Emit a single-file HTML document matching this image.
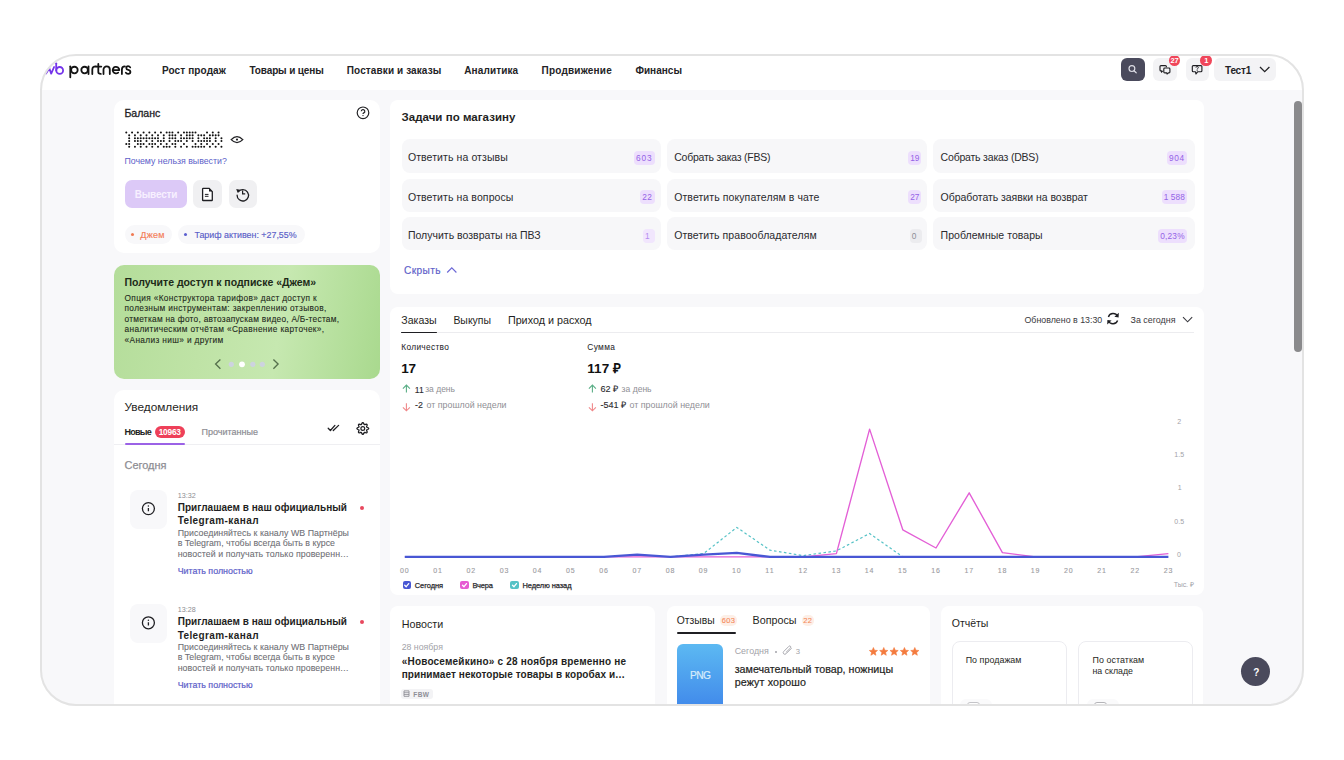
<!DOCTYPE html>
<html><head><meta charset="utf-8"><style>
html,body{margin:0;padding:0;background:#fff;width:1344px;height:760px;overflow:hidden;font-family:"Liberation Sans", sans-serif;}
#frame{position:absolute;left:40px;top:54px;width:1264px;height:652px;border-radius:36px;overflow:hidden;background:#f8f8fa;}
#pg{position:absolute;left:-40px;top:-54px;width:1344px;height:760px;}
#bord{position:absolute;left:40px;top:54px;width:1264px;height:652px;box-sizing:border-box;border:2px solid #e3e3e3;border-radius:36px;}
svg{position:absolute;overflow:visible;}
</style></head><body><div id="frame"><div id="pg">
<div style="position:absolute;left:0px;top:0px;width:1344px;height:89.5px;background:#ffffff;border-radius:0px;"></div>
<svg style="left:0;top:0" width="1" height="1"><g fill="none" stroke="#7434ea" stroke-width="1.8" stroke-linecap="round" stroke-linejoin="round"><path d="M46 73.6 L49.3 68.2 L51.2 73.6 L54.1 67"/><path d="M56.2 63.3 V70.4"/><circle cx="59.7" cy="70.4" r="3.4"/></g><g fill="none" stroke="#141414" stroke-width="1.8" stroke-linecap="round" stroke-linejoin="round"><path d="M70.3 66.3 V77.3"/><circle cx="74.4" cy="70.05" r="3.3"/><circle cx="84.6" cy="70.05" r="3.3"/><path d="M88.5 66.4 V74"/><path d="M92.3 74 V69.6 Q92.3 66.4 95.9 66.4"/><path d="M98.3 64 V72 Q98.3 73.9 100.8 73.9 M95.9 66.6 H101.3"/><path d="M103.5 74 V69.6 A3.15 3.15 0 0 1 109.8 69.6 V74"/><path d="M112.9 70.1 H119.3 A3.3 3.3 0 1 0 118.2 72.6"/><path d="M121.9 74 V69.6 Q121.9 66.4 124.9 66.4"/><path d="M130.2 67.4 Q129.5 66.2 128.1 66.2 Q126.3 66.2 126.3 67.9 Q126.3 69.5 128.3 69.9 Q130.4 70.3 130.4 72.1 Q130.4 73.9 128.1 73.9 Q126.4 73.9 125.8 72.7"/></g></svg>
<div id="t0" style="position:absolute;left:162px;top:64px;font-size:10px;line-height:13px;font-weight:700;color:#232326;letter-spacing:0.112px;white-space:nowrap;">Рост продаж</div>
<div id="t1" style="position:absolute;left:249.5px;top:64px;font-size:10px;line-height:13px;font-weight:700;color:#232326;letter-spacing:-0.132px;white-space:nowrap;">Товары и цены</div>
<div id="t2" style="position:absolute;left:346.8px;top:64px;font-size:10px;line-height:13px;font-weight:700;color:#232326;letter-spacing:0.106px;white-space:nowrap;">Поставки и заказы</div>
<div id="t3" style="position:absolute;left:464.2px;top:64px;font-size:10px;line-height:13px;font-weight:700;color:#232326;letter-spacing:0.129px;white-space:nowrap;">Аналитика</div>
<div id="t4" style="position:absolute;left:541.5px;top:64px;font-size:10px;line-height:13px;font-weight:700;color:#232326;letter-spacing:0.21px;white-space:nowrap;">Продвижение</div>
<div id="t5" style="position:absolute;left:635.4px;top:64px;font-size:10px;line-height:13px;font-weight:700;color:#232326;letter-spacing:0.023px;white-space:nowrap;">Финансы</div>
<div style="position:absolute;left:1121.2px;top:57.9px;width:23.6px;height:23.6px;background:#4a4a5c;border-radius:6px;"></div>
<svg style="left:1121px;top:58px" width="24" height="24" viewBox="0 0 24 24"><circle cx="10.9" cy="10.6" r="2.9" fill="none" stroke="#dcdce4" stroke-width="1.2"/><path d="M13 12.8 L15.2 14.8" stroke="#dcdce4" stroke-width="1.2" stroke-linecap="round"/></svg>
<div style="position:absolute;left:1152.6px;top:57.9px;width:24.0px;height:23.3px;background:#f3f3f5;border-radius:6px;"></div>
<svg style="left:0;top:0" width="1" height="1"><path d="M165.6 67.3 V66.6 a1 1 0 0 0 -1 -1 h-4.4 a1 1 0 0 0 -1 1 v3.3 a1 1 0 0 0 1 1 h0.5 v1.3 l1.3 -1.3" transform="translate(1000.8 0)" fill="none" stroke="#1f1f23" stroke-width="1.15" stroke-linejoin="round"/><path d="M1164.7 68 h4.3 a0.9 0.9 0 0 1 0.9 0.9 v3 a0.9 0.9 0 0 1 -0.9 0.9 h-0.6 l-1.3 1.2 l-0.3 -1.2 h-2.1 a0.9 0.9 0 0 1 -0.9 -0.9 v-3 a0.9 0.9 0 0 1 0.9 -0.9z" fill="#f3f3f5" stroke="#1f1f23" stroke-width="1.15" stroke-linejoin="round"/></svg>
<div style="position:absolute;left:1185.9px;top:57.9px;width:23.1px;height:23.3px;background:#f3f3f5;border-radius:6px;"></div>
<svg style="left:0;top:0" width="1" height="1"><path d="M1193.3 65.6 h7.6 a1 1 0 0 1 1 1 v4.2 a1 1 0 0 1 -1 1 h-3.3 l-1.6 2.2 l-0.5 -2.2 h-2.2 a1 1 0 0 1 -1 -1 v-4.2 a1 1 0 0 1 1 -1z" fill="none" stroke="#1f1f23" stroke-width="1.15" stroke-linejoin="round"/><path d="M1196 67.6 a1.15 1.15 0 1 1 1.7 1 c-0.45 0.25 -0.6 0.45 -0.6 0.9" fill="none" stroke="#1f1f23" stroke-width="0.95"/><circle cx="1197.1" cy="70.6" r="0.5" fill="#1f1f23"/></svg>
<div style="position:absolute;left:1168.7px;top:54.7px;width:11.4px;height:11.4px;background:#f0465a;border-radius:6px;"></div>
<div id="t6" style="position:absolute;left:1170.6px;top:56px;font-size:7.5px;line-height:10px;font-weight:700;color:#fff;letter-spacing:-0.372px;white-space:nowrap;">27</div>
<div style="position:absolute;left:1200.2px;top:54.7px;width:11.4px;height:11.4px;background:#f0465a;border-radius:6px;"></div>
<div id="t7" style="position:absolute;left:1204.15px;top:56px;font-size:7.5px;line-height:10px;font-weight:700;color:#fff;letter-spacing:-0.672px;white-space:nowrap;">1</div>
<div style="position:absolute;left:1214.4px;top:57.9px;width:61.6px;height:23.3px;background:#f3f3f5;border-radius:6px;"></div>
<div id="t8" style="position:absolute;left:1225px;top:64px;font-size:10px;line-height:13px;font-weight:700;color:#232326;letter-spacing:-0.212px;white-space:nowrap;">Тест1</div>
<svg style="left:1258px;top:64px" width="14" height="10" viewBox="0 0 14 10"><path d="M2 3 L6.7 7.6 L11.4 3" fill="none" stroke="#232326" stroke-width="1.3"/></svg>
<div style="position:absolute;left:1294px;top:101px;width:7.6px;height:251px;background:#8a8a8c;border-radius:4px;"></div>
<div style="position:absolute;left:114px;top:100px;width:266px;height:153.3px;background:#ffffff;border-radius:10px;"></div>
<div id="t9" style="position:absolute;left:124.4px;top:106px;font-size:10.573px;line-height:14px;font-weight:400;color:#232326;letter-spacing:0.0px;white-space:nowrap;-webkit-text-stroke-width:0.3px;">Баланс</div>
<svg style="left:355px;top:105px" width="16" height="16" viewBox="0 0 16 16"><circle cx="8" cy="7.8" r="5.8" fill="none" stroke="#232326" stroke-width="1.2"/><path d="M6.3 6.3 a1.75 1.75 0 1 1 2.5 1.6 c-0.6 0.3 -0.8 0.6 -0.8 1.2" fill="none" stroke="#232326" stroke-width="1.2"/><circle cx="8" cy="10.6" r="0.7" fill="#232326"/></svg>
<svg style="left:0;top:0" width="1" height="1"><g fill="#111"><circle cx="126.30" cy="132.50" r="1.02"/><circle cx="132.07" cy="132.50" r="1.02"/><circle cx="137.83" cy="132.50" r="1.02"/><circle cx="143.60" cy="132.50" r="1.02"/><circle cx="149.36" cy="132.50" r="1.02"/><circle cx="155.13" cy="132.50" r="1.02"/><circle cx="160.90" cy="132.50" r="1.02"/><circle cx="166.66" cy="132.50" r="1.02"/><circle cx="169.54" cy="132.50" r="1.02"/><circle cx="172.43" cy="132.50" r="1.02"/><circle cx="178.19" cy="132.50" r="1.02"/><circle cx="183.96" cy="132.50" r="1.02"/><circle cx="186.84" cy="132.50" r="1.02"/><circle cx="189.73" cy="132.50" r="1.02"/><circle cx="192.61" cy="132.50" r="1.02"/><circle cx="195.49" cy="132.50" r="1.02"/><circle cx="207.02" cy="132.50" r="1.02"/><circle cx="212.79" cy="132.50" r="1.02"/><circle cx="218.56" cy="132.50" r="1.02"/><circle cx="129.18" cy="135.36" r="1.02"/><circle cx="134.95" cy="135.36" r="1.02"/><circle cx="140.72" cy="135.36" r="1.02"/><circle cx="146.48" cy="135.36" r="1.02"/><circle cx="152.25" cy="135.36" r="1.02"/><circle cx="158.01" cy="135.36" r="1.02"/><circle cx="163.78" cy="135.36" r="1.02"/><circle cx="169.54" cy="135.36" r="1.02"/><circle cx="172.43" cy="135.36" r="1.02"/><circle cx="175.31" cy="135.36" r="1.02"/><circle cx="181.08" cy="135.36" r="1.02"/><circle cx="186.84" cy="135.36" r="1.02"/><circle cx="189.73" cy="135.36" r="1.02"/><circle cx="192.61" cy="135.36" r="1.02"/><circle cx="198.38" cy="135.36" r="1.02"/><circle cx="201.26" cy="135.36" r="1.02"/><circle cx="204.14" cy="135.36" r="1.02"/><circle cx="209.91" cy="135.36" r="1.02"/><circle cx="212.79" cy="135.36" r="1.02"/><circle cx="215.67" cy="135.36" r="1.02"/><circle cx="218.56" cy="135.36" r="1.02"/><circle cx="129.18" cy="138.22" r="1.02"/><circle cx="134.95" cy="138.22" r="1.02"/><circle cx="137.83" cy="138.22" r="1.02"/><circle cx="140.72" cy="138.22" r="1.02"/><circle cx="143.60" cy="138.22" r="1.02"/><circle cx="146.48" cy="138.22" r="1.02"/><circle cx="149.36" cy="138.22" r="1.02"/><circle cx="152.25" cy="138.22" r="1.02"/><circle cx="155.13" cy="138.22" r="1.02"/><circle cx="158.01" cy="138.22" r="1.02"/><circle cx="163.78" cy="138.22" r="1.02"/><circle cx="169.54" cy="138.22" r="1.02"/><circle cx="172.43" cy="138.22" r="1.02"/><circle cx="175.31" cy="138.22" r="1.02"/><circle cx="181.08" cy="138.22" r="1.02"/><circle cx="183.96" cy="138.22" r="1.02"/><circle cx="186.84" cy="138.22" r="1.02"/><circle cx="189.73" cy="138.22" r="1.02"/><circle cx="192.61" cy="138.22" r="1.02"/><circle cx="198.38" cy="138.22" r="1.02"/><circle cx="204.14" cy="138.22" r="1.02"/><circle cx="207.02" cy="138.22" r="1.02"/><circle cx="209.91" cy="138.22" r="1.02"/><circle cx="215.67" cy="138.22" r="1.02"/><circle cx="221.44" cy="138.22" r="1.02"/><circle cx="129.18" cy="141.08" r="1.02"/><circle cx="134.95" cy="141.08" r="1.02"/><circle cx="137.83" cy="141.08" r="1.02"/><circle cx="140.72" cy="141.08" r="1.02"/><circle cx="146.48" cy="141.08" r="1.02"/><circle cx="152.25" cy="141.08" r="1.02"/><circle cx="158.01" cy="141.08" r="1.02"/><circle cx="160.90" cy="141.08" r="1.02"/><circle cx="163.78" cy="141.08" r="1.02"/><circle cx="169.54" cy="141.08" r="1.02"/><circle cx="175.31" cy="141.08" r="1.02"/><circle cx="178.19" cy="141.08" r="1.02"/><circle cx="181.08" cy="141.08" r="1.02"/><circle cx="186.84" cy="141.08" r="1.02"/><circle cx="192.61" cy="141.08" r="1.02"/><circle cx="198.38" cy="141.08" r="1.02"/><circle cx="201.26" cy="141.08" r="1.02"/><circle cx="204.14" cy="141.08" r="1.02"/><circle cx="207.02" cy="141.08" r="1.02"/><circle cx="209.91" cy="141.08" r="1.02"/><circle cx="215.67" cy="141.08" r="1.02"/><circle cx="221.44" cy="141.08" r="1.02"/><circle cx="126.30" cy="143.94" r="1.02"/><circle cx="129.18" cy="143.94" r="1.02"/><circle cx="137.83" cy="143.94" r="1.02"/><circle cx="140.72" cy="143.94" r="1.02"/><circle cx="143.60" cy="143.94" r="1.02"/><circle cx="149.36" cy="143.94" r="1.02"/><circle cx="152.25" cy="143.94" r="1.02"/><circle cx="155.13" cy="143.94" r="1.02"/><circle cx="160.90" cy="143.94" r="1.02"/><circle cx="166.66" cy="143.94" r="1.02"/><circle cx="172.43" cy="143.94" r="1.02"/><circle cx="175.31" cy="143.94" r="1.02"/><circle cx="183.96" cy="143.94" r="1.02"/><circle cx="195.49" cy="143.94" r="1.02"/><circle cx="201.26" cy="143.94" r="1.02"/><circle cx="207.02" cy="143.94" r="1.02"/><circle cx="212.79" cy="143.94" r="1.02"/><circle cx="218.56" cy="143.94" r="1.02"/><circle cx="129.18" cy="146.80" r="1.02"/><circle cx="134.95" cy="146.80" r="1.02"/><circle cx="140.72" cy="146.80" r="1.02"/><circle cx="146.48" cy="146.80" r="1.02"/><circle cx="152.25" cy="146.80" r="1.02"/><circle cx="158.01" cy="146.80" r="1.02"/><circle cx="163.78" cy="146.80" r="1.02"/><circle cx="166.66" cy="146.80" r="1.02"/><circle cx="169.54" cy="146.80" r="1.02"/><circle cx="175.31" cy="146.80" r="1.02"/><circle cx="181.08" cy="146.80" r="1.02"/><circle cx="186.84" cy="146.80" r="1.02"/><circle cx="192.61" cy="146.80" r="1.02"/><circle cx="195.49" cy="146.80" r="1.02"/><circle cx="198.38" cy="146.80" r="1.02"/><circle cx="201.26" cy="146.80" r="1.02"/><circle cx="204.14" cy="146.80" r="1.02"/><circle cx="209.91" cy="146.80" r="1.02"/><circle cx="215.67" cy="146.80" r="1.02"/><circle cx="221.44" cy="146.80" r="1.02"/></g></svg>
<svg style="left:229px;top:133px" width="16" height="13" viewBox="0 0 16 13"><path d="M2.2 6.6 Q8 0.6 13.8 6.6 Q8 12.6 2.2 6.6z" fill="none" stroke="#232326" stroke-width="1.3"/><circle cx="8" cy="6.6" r="1.1" fill="#232326"/></svg>
<div id="t10" style="position:absolute;left:124.4px;top:156px;font-size:8.797px;line-height:11px;font-weight:400;color:#5c60c9;letter-spacing:0.0px;white-space:nowrap;">Почему нельзя вывести?</div>
<div style="position:absolute;left:124.6px;top:179.8px;width:62.7px;height:28.7px;background:#dcc9f7;border-radius:7px;"></div>
<div id="t11" style="position:absolute;left:134.7px;top:188px;font-size:10px;line-height:13px;font-weight:700;color:#f7f0ff;letter-spacing:-0.19px;white-space:nowrap;">Вывести</div>
<div style="position:absolute;left:193.2px;top:179.8px;width:28.7px;height:28.7px;background:#f0f0f2;border-radius:7px;"></div>
<svg style="left:193px;top:180px" width="29" height="29" viewBox="0 0 29 29"><path d="M10.2 8.3 h5.8 l3.3 3.3 v8.3 a0.6 0.6 0 0 1 -0.6 0.6 h-8.5 a0.6 0.6 0 0 1 -0.6 -0.6 v-11 a0.6 0.6 0 0 1 0.6 -0.6z" fill="#fff" stroke="#1f1f23" stroke-width="1.3" stroke-linejoin="round"/><path d="M16 8.3 l3.3 3.3 h-3.3z" fill="#1f1f23"/><path d="M11.9 14.4 h3.6 M11.9 16.3 h3.6" stroke="#1f1f23" stroke-width="1"/></svg>
<div style="position:absolute;left:228.5px;top:179.8px;width:28.3px;height:28.7px;background:#f0f0f2;border-radius:7px;"></div>
<svg style="left:228px;top:180px" width="29" height="29" viewBox="0 0 29 29"><path d="M10.3 11.8 A5.7 5.7 0 1 1 9.1 15.2" fill="none" stroke="#1f1f23" stroke-width="1.3" stroke-linecap="round"/><path d="M8.2 9.1 l3.8 0.6 l-2.4 3z" fill="#1f1f23"/><path d="M14.6 10.6 v3.2 h2.6" fill="none" stroke="#1f1f23" stroke-width="1.2"/></svg>
<div style="position:absolute;left:124.6px;top:225.4px;width:47.0px;height:19.0px;background:#f8f8fa;border-radius:10px;"></div>
<div style="position:absolute;left:130.9px;top:232.8px;width:3.0px;height:3.0px;background:#f07a52;border-radius:2px;"></div>
<div id="t12" style="position:absolute;left:140.3px;top:229px;font-size:9.095px;line-height:12px;font-weight:400;color:#f47c58;letter-spacing:0.236px;white-space:nowrap;-webkit-text-stroke-width:0.15px;">Джем</div>
<div style="position:absolute;left:177.9px;top:225.4px;width:126.8px;height:19.0px;background:#f8f8fa;border-radius:10px;"></div>
<div style="position:absolute;left:184px;top:232.8px;width:3px;height:3.0px;background:#5b5fcf;border-radius:2px;"></div>
<div id="t13" style="position:absolute;left:194.4px;top:229px;font-size:8.897px;line-height:12px;font-weight:400;color:#5a5ec8;letter-spacing:-0.0px;white-space:nowrap;-webkit-text-stroke-width:0.15px;">Тариф активен: +27,55%</div>
<div style="position:absolute;left:114px;top:265.2px;width:266px;height:113.8px;background:linear-gradient(100deg,#b4dd9a 0%,#bfe3a6 35%,#c6e8b0 62%,#a9d98e 100%);border-radius:10px;"></div>
<div id="t14" style="position:absolute;left:124.5px;top:275px;font-size:10.5px;line-height:14px;font-weight:700;color:#1c2a18;letter-spacing:-0.01px;white-space:nowrap;">Получите доступ к подписке «Джем»</div>
<div id="t15" style="position:absolute;left:124.5px;top:293px;font-size:8.3px;line-height:11px;font-weight:400;color:#1f2a1c;letter-spacing:0.343px;white-space:nowrap;-webkit-text-stroke-width:0.1px;">Опция «Конструктора тарифов» даст доступ к</div>
<div id="t16" style="position:absolute;left:124.5px;top:303px;font-size:8.3px;line-height:11px;font-weight:400;color:#1f2a1c;letter-spacing:0.364px;white-space:nowrap;-webkit-text-stroke-width:0.1px;">полезным инструментам: закреплению отзывов,</div>
<div id="t17" style="position:absolute;left:124.5px;top:314px;font-size:8.3px;line-height:11px;font-weight:400;color:#1f2a1c;letter-spacing:0.274px;white-space:nowrap;-webkit-text-stroke-width:0.1px;">отметкам на фото, автозапускам видео, А/Б-тестам,</div>
<div id="t18" style="position:absolute;left:124.5px;top:324px;font-size:8.3px;line-height:11px;font-weight:400;color:#1f2a1c;letter-spacing:0.357px;white-space:nowrap;-webkit-text-stroke-width:0.1px;">аналитическим отчётам «Сравнение карточек»,</div>
<div id="t19" style="position:absolute;left:124.5px;top:335px;font-size:8.3px;line-height:11px;font-weight:400;color:#1f2a1c;letter-spacing:0.364px;white-space:nowrap;-webkit-text-stroke-width:0.1px;">«Анализ ниш» и другим</div>
<svg style="left:0;top:0" width="1" height="1"><path d="M220.4 359.4 L215.6 364.1 L220.4 368.8 M273.4 359.4 L278.1 364.1 L273.4 368.8" fill="none" stroke="#55704c" stroke-width="1.35"/><circle cx="231.3" cy="364.3" r="2.6" fill="#cdd3df"/><circle cx="242" cy="364.3" r="2.9" fill="#ffffff"/><circle cx="252.8" cy="364.3" r="2.6" fill="#cdd3df"/><circle cx="262.3" cy="364.3" r="2.6" fill="#cdd3df"/></svg>
<div style="position:absolute;left:114px;top:389.7px;width:266px;height:370.3px;background:#ffffff;border-radius:10px;"></div>
<div id="t20" style="position:absolute;left:124.5px;top:400px;font-size:11.803px;line-height:15px;font-weight:400;color:#1f1f23;letter-spacing:0.0px;white-space:nowrap;">Уведомления</div>
<div id="t21" style="position:absolute;left:124.5px;top:426px;font-size:9px;line-height:12px;font-weight:700;color:#1f1f23;letter-spacing:-0.747px;white-space:nowrap;">Новые</div>
<div style="position:absolute;left:154.5px;top:426px;width:30.3px;height:11.9px;background:#ee4059;border-radius:6px;"></div>
<div id="t22" style="position:absolute;left:158.7px;top:427px;font-size:8.3px;line-height:11px;font-weight:700;color:#fff;letter-spacing:-0.216px;white-space:nowrap;">10963</div>
<div id="t23" style="position:absolute;left:201.5px;top:426px;font-size:9.007px;line-height:12px;font-weight:400;color:#8d8d93;letter-spacing:-0.0px;white-space:nowrap;-webkit-text-stroke-width:0.2px;">Прочитанные</div>
<div style="position:absolute;left:114px;top:443.6px;width:266px;height:1.0px;background:#efeff2;border-radius:0px;"></div>
<div style="position:absolute;left:124.5px;top:443px;width:60.6px;height:2px;background:#9b62e6;border-radius:1px;"></div>
<svg style="left:0;top:0" width="1" height="1"><path d="M328.2 428.3 L330.4 430.5 L334.9 425.4 M333.3 430.5 L338.6 425.4" fill="none" stroke="#1f1f23" stroke-width="1.3" stroke-linecap="round" stroke-linejoin="round"/></svg>
<svg style="left:0;top:0" width="1" height="1"><polygon points="368.70,428.50 368.41,429.05 367.70,429.48 366.98,429.77 366.59,430.07 366.65,430.56 366.96,431.28 367.16,432.08 366.97,432.67 366.38,432.86 365.58,432.66 364.86,432.35 364.37,432.29 364.07,432.68 363.78,433.40 363.35,434.11 362.80,434.40 362.25,434.11 361.82,433.40 361.53,432.68 361.23,432.29 360.74,432.35 360.02,432.66 359.22,432.86 358.63,432.67 358.44,432.08 358.64,431.28 358.95,430.56 359.01,430.07 358.62,429.77 357.90,429.48 357.19,429.05 356.90,428.50 357.19,427.95 357.90,427.52 358.62,427.23 359.01,426.93 358.95,426.44 358.64,425.72 358.44,424.92 358.63,424.33 359.22,424.14 360.02,424.34 360.74,424.65 361.23,424.71 361.53,424.32 361.82,423.60 362.25,422.89 362.80,422.60 363.35,422.89 363.78,423.60 364.07,424.32 364.37,424.71 364.86,424.65 365.58,424.34 366.38,424.14 366.97,424.33 367.16,424.92 366.96,425.72 366.65,426.44 366.59,426.93 366.98,427.23 367.70,427.52 368.41,427.95" fill="none" stroke="#1f1f23" stroke-width="1.3" stroke-linejoin="round"/><circle cx="362.8" cy="428.5" r="1.9" fill="none" stroke="#1f1f23" stroke-width="1.2"/></svg>
<div id="t24" style="position:absolute;left:124.5px;top:458px;font-size:10.957px;line-height:14px;font-weight:400;color:#8d8d93;letter-spacing:0.0px;white-space:nowrap;-webkit-text-stroke-width:0.25px;">Сегодня</div>
<div style="position:absolute;left:129.9px;top:489.6px;width:37.2px;height:39.4px;background:#f8f8fa;border-radius:8px;"></div>
<svg style="left:0;top:0" width="1" height="1"><circle cx="148.4" cy="508.6" r="6" fill="none" stroke="#1f1f23" stroke-width="1.3"/><circle cx="148.4" cy="506.1" r="0.75" fill="#1f1f23"/><path d="M148.4 508.0 v3.2" stroke="#1f1f23" stroke-width="1.3"/></svg>
<div id="t25" style="position:absolute;left:177.7px;top:492px;font-size:7.188px;line-height:9px;font-weight:400;color:#8e8e94;letter-spacing:0.0px;white-space:nowrap;">13:32</div>
<div id="t26" style="position:absolute;left:177.7px;top:501px;font-size:10px;line-height:13px;font-weight:700;color:#1f1f23;letter-spacing:0.028px;white-space:nowrap;">Приглашаем в наш официальный</div>
<div id="t27" style="position:absolute;left:177.7px;top:514px;font-size:10px;line-height:13px;font-weight:700;color:#1f1f23;letter-spacing:0.402px;white-space:nowrap;">Telegram-канал</div>
<div style="position:absolute;left:360px;top:505.7px;width:4px;height:4.0px;background:#e8485e;border-radius:2px;"></div>
<div id="t28" style="position:absolute;left:177.7px;top:528px;font-size:8.8px;line-height:11px;font-weight:400;color:#6e6e74;letter-spacing:0.049px;white-space:nowrap;-webkit-text-stroke-width:0.08px;">Присоединяйтесь к каналу WB Партнёры</div>
<div id="t29" style="position:absolute;left:177.7px;top:538px;font-size:8.8px;line-height:11px;font-weight:400;color:#6e6e74;letter-spacing:0.021px;white-space:nowrap;-webkit-text-stroke-width:0.08px;">в Telegram, чтобы всегда быть в курсе</div>
<div id="t30" style="position:absolute;left:177.7px;top:549px;font-size:8.8px;line-height:11px;font-weight:400;color:#6e6e74;letter-spacing:0.077px;white-space:nowrap;-webkit-text-stroke-width:0.08px;">новостей и получать только проверенн…</div>
<div id="t31" style="position:absolute;left:177.7px;top:565px;font-size:8.866px;line-height:12px;font-weight:400;color:#5c60c9;letter-spacing:0.0px;white-space:nowrap;-webkit-text-stroke-width:0.2px;">Читать полностью</div>
<div style="position:absolute;left:129.9px;top:603.8px;width:37.2px;height:39.4px;background:#f8f8fa;border-radius:8px;"></div>
<svg style="left:0;top:0" width="1" height="1"><circle cx="148.4" cy="622.8000000000001" r="6" fill="none" stroke="#1f1f23" stroke-width="1.3"/><circle cx="148.4" cy="620.3000000000001" r="0.75" fill="#1f1f23"/><path d="M148.4 622.2 v3.2" stroke="#1f1f23" stroke-width="1.3"/></svg>
<div id="t32" style="position:absolute;left:177.7px;top:606px;font-size:7.188px;line-height:9px;font-weight:400;color:#8e8e94;letter-spacing:0.0px;white-space:nowrap;">13:28</div>
<div id="t33" style="position:absolute;left:177.7px;top:615px;font-size:10px;line-height:13px;font-weight:700;color:#1f1f23;letter-spacing:0.028px;white-space:nowrap;">Приглашаем в наш официальный</div>
<div id="t34" style="position:absolute;left:177.7px;top:629px;font-size:10px;line-height:13px;font-weight:700;color:#1f1f23;letter-spacing:0.402px;white-space:nowrap;">Telegram-канал</div>
<div style="position:absolute;left:360px;top:619.9px;width:4px;height:4.0px;background:#e8485e;border-radius:2px;"></div>
<div id="t35" style="position:absolute;left:177.7px;top:642px;font-size:8.8px;line-height:11px;font-weight:400;color:#6e6e74;letter-spacing:0.049px;white-space:nowrap;-webkit-text-stroke-width:0.08px;">Присоединяйтесь к каналу WB Партнёры</div>
<div id="t36" style="position:absolute;left:177.7px;top:652px;font-size:8.8px;line-height:11px;font-weight:400;color:#6e6e74;letter-spacing:0.021px;white-space:nowrap;-webkit-text-stroke-width:0.08px;">в Telegram, чтобы всегда быть в курсе</div>
<div id="t37" style="position:absolute;left:177.7px;top:663px;font-size:8.8px;line-height:11px;font-weight:400;color:#6e6e74;letter-spacing:0.077px;white-space:nowrap;-webkit-text-stroke-width:0.08px;">новостей и получать только проверенн…</div>
<div id="t38" style="position:absolute;left:177.7px;top:679px;font-size:8.866px;line-height:12px;font-weight:400;color:#5c60c9;letter-spacing:0.0px;white-space:nowrap;-webkit-text-stroke-width:0.2px;">Читать полностью</div>
<div style="position:absolute;left:390px;top:100px;width:813.5px;height:194.3px;background:#ffffff;border-radius:8px;"></div>
<div id="t39" style="position:absolute;left:401.5px;top:110px;font-size:11.5px;line-height:15px;font-weight:700;color:#1f1f23;letter-spacing:0.032px;white-space:nowrap;">Задачи по магазину</div>
<div style="position:absolute;left:401.5px;top:139.4px;width:259.5px;height:33.4px;background:#f7f7f9;border-radius:8px;"></div>
<div id="t40" style="position:absolute;left:407.9px;top:150px;font-size:10.5px;line-height:14px;font-weight:400;color:#2a2a2e;letter-spacing:0.096px;white-space:nowrap;">Ответить на отзывы</div>
<div style="position:absolute;left:633.8px;top:150.7px;width:20.8px;height:14.0px;background:#eddffd;border-radius:4px;"></div>
<div id="t41" style="position:absolute;left:636.1px;top:153px;font-size:8.3px;line-height:11px;font-weight:400;color:#9463e6;letter-spacing:0.785px;white-space:nowrap;">603</div>
<div style="position:absolute;left:667px;top:139.4px;width:260px;height:33.4px;background:#f7f7f9;border-radius:8px;"></div>
<div id="t42" style="position:absolute;left:674.2px;top:150px;font-size:10.5px;line-height:14px;font-weight:400;color:#2a2a2e;letter-spacing:-0.223px;white-space:nowrap;">Собрать заказ (FBS)</div>
<div style="position:absolute;left:907.9px;top:150.7px;width:13.6px;height:14.0px;background:#eddffd;border-radius:4px;"></div>
<div id="t43" style="position:absolute;left:910.2px;top:153px;font-size:8.3px;line-height:11px;font-weight:400;color:#9463e6;letter-spacing:-0.117px;white-space:nowrap;">19</div>
<div style="position:absolute;left:933px;top:139.4px;width:261.5px;height:33.4px;background:#f7f7f9;border-radius:8px;"></div>
<div id="t44" style="position:absolute;left:940.6px;top:150px;font-size:10.5px;line-height:14px;font-weight:400;color:#2a2a2e;letter-spacing:-0.195px;white-space:nowrap;">Собрать заказ (DBS)</div>
<div style="position:absolute;left:1166.7px;top:150.7px;width:20.4px;height:14.0px;background:#eddffd;border-radius:4px;"></div>
<div id="t45" style="position:absolute;left:1169.0px;top:153px;font-size:8.3px;line-height:11px;font-weight:400;color:#9463e6;letter-spacing:0.652px;white-space:nowrap;">904</div>
<div style="position:absolute;left:401.5px;top:178.7px;width:259.5px;height:33.1px;background:#f7f7f9;border-radius:8px;"></div>
<div id="t46" style="position:absolute;left:407.9px;top:190px;font-size:10.5px;line-height:14px;font-weight:400;color:#2a2a2e;letter-spacing:0.093px;white-space:nowrap;">Ответить на вопросы</div>
<div style="position:absolute;left:640.0px;top:190.0px;width:14.6px;height:14.0px;background:#eddffd;border-radius:4px;"></div>
<div id="t47" style="position:absolute;left:642.3px;top:192px;font-size:8.3px;line-height:11px;font-weight:400;color:#9463e6;letter-spacing:0.383px;white-space:nowrap;">22</div>
<div style="position:absolute;left:667px;top:178.7px;width:260px;height:33.1px;background:#f7f7f9;border-radius:8px;"></div>
<div id="t48" style="position:absolute;left:674.2px;top:190px;font-size:10.5px;line-height:14px;font-weight:400;color:#2a2a2e;letter-spacing:0.088px;white-space:nowrap;">Ответить покупателям в чате</div>
<div style="position:absolute;left:907.9px;top:190.0px;width:13.6px;height:14.0px;background:#eddffd;border-radius:4px;"></div>
<div id="t49" style="position:absolute;left:910.2px;top:192px;font-size:8.3px;line-height:11px;font-weight:400;color:#9463e6;letter-spacing:-0.117px;white-space:nowrap;">27</div>
<div style="position:absolute;left:933px;top:178.7px;width:261.5px;height:33.1px;background:#f7f7f9;border-radius:8px;"></div>
<div id="t50" style="position:absolute;left:940.6px;top:190px;font-size:10.5px;line-height:14px;font-weight:400;color:#2a2a2e;letter-spacing:-0.049px;white-space:nowrap;">Обработать заявки на возврат</div>
<div style="position:absolute;left:1161.5px;top:190.0px;width:25.6px;height:14.0px;background:#eddffd;border-radius:4px;"></div>
<div id="t51" style="position:absolute;left:1163.8px;top:192px;font-size:8.3px;line-height:11px;font-weight:400;color:#9463e6;letter-spacing:0.047px;white-space:nowrap;">1 588</div>
<div style="position:absolute;left:401.5px;top:217.2px;width:259.5px;height:32.6px;background:#f7f7f9;border-radius:8px;"></div>
<div id="t52" style="position:absolute;left:407.9px;top:228px;font-size:10.5px;line-height:14px;font-weight:400;color:#2a2a2e;letter-spacing:0.01px;white-space:nowrap;">Получить возвраты на ПВЗ</div>
<div style="position:absolute;left:642.7px;top:228.5px;width:11.9px;height:14.0px;background:#f1e6fd;border-radius:4px;"></div>
<div id="t53" style="position:absolute;left:645.0px;top:231px;font-size:8.3px;line-height:11px;font-weight:400;color:#b48cf0;letter-spacing:2.675px;white-space:nowrap;">1</div>
<div style="position:absolute;left:667px;top:217.2px;width:260px;height:32.6px;background:#f7f7f9;border-radius:8px;"></div>
<div id="t54" style="position:absolute;left:674.2px;top:228px;font-size:10.5px;line-height:14px;font-weight:400;color:#2a2a2e;letter-spacing:0.069px;white-space:nowrap;">Ответить правообладателям</div>
<div style="position:absolute;left:909.5px;top:228.5px;width:12.0px;height:14.0px;background:#ececef;border-radius:4px;"></div>
<div id="t55" style="position:absolute;left:911.8px;top:231px;font-size:8.3px;line-height:11px;font-weight:400;color:#8e8e96;letter-spacing:2.775px;white-space:nowrap;">0</div>
<div style="position:absolute;left:933px;top:217.2px;width:261.5px;height:32.6px;background:#f7f7f9;border-radius:8px;"></div>
<div id="t56" style="position:absolute;left:940.6px;top:228px;font-size:10.5px;line-height:14px;font-weight:400;color:#2a2a2e;letter-spacing:0.048px;white-space:nowrap;">Проблемные товары</div>
<div style="position:absolute;left:1157.9px;top:228.5px;width:29.2px;height:14.0px;background:#eddffd;border-radius:4px;"></div>
<div id="t57" style="position:absolute;left:1160.2px;top:231px;font-size:8.3px;line-height:11px;font-weight:400;color:#9463e6;letter-spacing:0.214px;white-space:nowrap;">0,23%</div>
<div id="t58" style="position:absolute;left:404px;top:264px;font-size:10.165px;line-height:13px;font-weight:400;color:#5c60c9;letter-spacing:0.382px;white-space:nowrap;-webkit-text-stroke-width:0.15px;">Скрыть</div>
<svg style="left:0;top:0" width="1" height="1"><path d="M447.2 272.5 L451.8 267.9 L456.4 272.5" fill="none" stroke="#6c68d6" stroke-width="1.2"/></svg>
<div style="position:absolute;left:390px;top:306.9px;width:813.7px;height:288.3px;background:#ffffff;border-radius:8px;"></div>
<div id="t59" style="position:absolute;left:401.3px;top:313px;font-size:10.593px;line-height:14px;font-weight:400;color:#1f1f23;letter-spacing:0.0px;white-space:nowrap;">Заказы</div>
<div id="t60" style="position:absolute;left:453.4px;top:314px;font-size:10.463px;line-height:14px;font-weight:400;color:#1f1f23;letter-spacing:0.0px;white-space:nowrap;">Выкупы</div>
<div id="t61" style="position:absolute;left:507.9px;top:313px;font-size:10.77px;line-height:14px;font-weight:400;color:#1f1f23;letter-spacing:0.0px;white-space:nowrap;">Приход и расход</div>
<div style="position:absolute;left:401.3px;top:332.2px;width:792.5px;height:1.0px;background:#ececef;border-radius:0px;"></div>
<div style="position:absolute;left:401.3px;top:331.7px;width:35.4px;height:1.7px;background:#1f1f23;border-radius:1px;"></div>
<div id="t62" style="position:absolute;left:1024.5px;top:314px;font-size:8.842px;line-height:12px;font-weight:400;color:#3a3a40;letter-spacing:0.0px;white-space:nowrap;">Обновлено в 13:30</div>
<svg style="left:0;top:0" width="1" height="1"><path d="M1117.6 316.3 A5 5 0 0 0 1108.4 316.9 M1108.4 321 A5 5 0 0 0 1117.6 320.4" fill="none" stroke="#1f1f23" stroke-width="1.4"/><path d="M1118.8 312.8 L1118.6 317.4 L1114.4 316.8z M1107.2 324.5 L1107.4 319.9 L1111.6 320.5z" fill="#1f1f23"/></svg>
<div id="t63" style="position:absolute;left:1130.5px;top:314px;font-size:8.919px;line-height:12px;font-weight:400;color:#3a3a40;letter-spacing:0.0px;white-space:nowrap;">За сегодня</div>
<svg style="left:0;top:0" width="1" height="1"><path d="M1183 317.2 L1187.6 321.8 L1192.2 317.2" fill="none" stroke="#3a3a40" stroke-width="1.1"/></svg>
<div id="t64" style="position:absolute;left:401.3px;top:342px;font-size:8.346px;line-height:11px;font-weight:400;color:#2a2a2e;letter-spacing:0.309px;white-space:nowrap;-webkit-text-stroke-width:0.05px;">Количество</div>
<div id="t65" style="position:absolute;left:401.3px;top:360px;font-size:13.5px;line-height:17px;font-weight:700;color:#111;letter-spacing:-0.416px;white-space:nowrap;">17</div>
<div id="t66" style="position:absolute;left:587.3px;top:342px;font-size:8.346px;line-height:11px;font-weight:400;color:#2a2a2e;letter-spacing:0.357px;white-space:nowrap;-webkit-text-stroke-width:0.05px;">Сумма</div>
<div id="t67" style="position:absolute;left:587.3px;top:360px;font-size:13.5px;line-height:17px;font-weight:700;color:#111;letter-spacing:0.034px;white-space:nowrap;">117 ₽</div>
<svg style="left:0;top:0" width="1" height="1"><path d="M406.4 392.6 V385.1 M402.9 388.6 L406.4 385.1 L409.9 388.6" fill="none" stroke="#5aae86" stroke-width="1.1"/><path d="M406.4 403.3 V410.8 M402.9 407.3 L406.4 410.8 L409.9 407.3" fill="none" stroke="#f0888a" stroke-width="1.1"/></svg>
<svg style="left:0;top:0" width="1" height="1"><path d="M592.4 392.6 V385.1 M588.9 388.6 L592.4 385.1 L595.9 388.6" fill="none" stroke="#5aae86" stroke-width="1.1"/><path d="M592.4 403.3 V410.8 M588.9 407.3 L592.4 410.8 L595.9 407.3" fill="none" stroke="#f0888a" stroke-width="1.1"/></svg>
<div id="t68" style="position:absolute;left:414.8px;top:385px;font-size:8.6px;line-height:11px;font-weight:400;color:#2a2a2e;letter-spacing:0px;white-space:nowrap;-webkit-text-stroke-width:0.1px;">11</div>
<div id="t69" style="position:absolute;left:425.2px;top:384px;font-size:8.507px;line-height:11px;font-weight:400;color:#8f8f95;letter-spacing:0.0px;white-space:nowrap;">за день</div>
<div id="t70" style="position:absolute;left:415px;top:399px;font-size:8.881px;line-height:12px;font-weight:400;color:#2a2a2e;letter-spacing:0.0px;white-space:nowrap;-webkit-text-stroke-width:0.1px;">-2</div>
<div id="t71" style="position:absolute;left:426.6px;top:399px;font-size:8.847px;line-height:12px;font-weight:400;color:#8f8f95;letter-spacing:0.0px;white-space:nowrap;">от прошлой недели</div>
<div id="t72" style="position:absolute;left:600.5px;top:383px;font-size:9.14px;line-height:12px;font-weight:400;color:#2a2a2e;letter-spacing:0.0px;white-space:nowrap;-webkit-text-stroke-width:0.1px;">62 ₽</div>
<div id="t73" style="position:absolute;left:621.6px;top:384px;font-size:8.564px;line-height:11px;font-weight:400;color:#8f8f95;letter-spacing:0.0px;white-space:nowrap;">за день</div>
<div id="t74" style="position:absolute;left:600.5px;top:399px;font-size:9.059px;line-height:12px;font-weight:400;color:#2a2a2e;letter-spacing:0.0px;white-space:nowrap;-webkit-text-stroke-width:0.1px;">-541 ₽</div>
<div id="t75" style="position:absolute;left:629.5px;top:399px;font-size:8.902px;line-height:12px;font-weight:400;color:#8f8f95;letter-spacing:0.0px;white-space:nowrap;">от прошлой недели</div>
<div id="t76" style="position:absolute;left:400.05px;top:566px;font-size:7px;line-height:9px;font-weight:400;color:#9c9ca2;letter-spacing:0.852px;white-space:nowrap;-webkit-text-stroke-width:0.12px;">00</div>
<div id="t77" style="position:absolute;left:433.25px;top:566px;font-size:7px;line-height:9px;font-weight:400;color:#9c9ca2;letter-spacing:0.852px;white-space:nowrap;-webkit-text-stroke-width:0.12px;">01</div>
<div id="t78" style="position:absolute;left:466.45px;top:566px;font-size:7px;line-height:9px;font-weight:400;color:#9c9ca2;letter-spacing:0.852px;white-space:nowrap;-webkit-text-stroke-width:0.12px;">02</div>
<div id="t79" style="position:absolute;left:499.65px;top:566px;font-size:7px;line-height:9px;font-weight:400;color:#9c9ca2;letter-spacing:0.852px;white-space:nowrap;-webkit-text-stroke-width:0.12px;">03</div>
<div id="t80" style="position:absolute;left:532.85px;top:566px;font-size:7px;line-height:9px;font-weight:400;color:#9c9ca2;letter-spacing:0.852px;white-space:nowrap;-webkit-text-stroke-width:0.12px;">04</div>
<div id="t81" style="position:absolute;left:566.05px;top:566px;font-size:7px;line-height:9px;font-weight:400;color:#9c9ca2;letter-spacing:0.852px;white-space:nowrap;-webkit-text-stroke-width:0.12px;">05</div>
<div id="t82" style="position:absolute;left:599.25px;top:566px;font-size:7px;line-height:9px;font-weight:400;color:#9c9ca2;letter-spacing:0.852px;white-space:nowrap;-webkit-text-stroke-width:0.12px;">06</div>
<div id="t83" style="position:absolute;left:632.45px;top:566px;font-size:7px;line-height:9px;font-weight:400;color:#9c9ca2;letter-spacing:0.852px;white-space:nowrap;-webkit-text-stroke-width:0.12px;">07</div>
<div id="t84" style="position:absolute;left:665.65px;top:566px;font-size:7px;line-height:9px;font-weight:400;color:#9c9ca2;letter-spacing:0.852px;white-space:nowrap;-webkit-text-stroke-width:0.12px;">08</div>
<div id="t85" style="position:absolute;left:698.85px;top:566px;font-size:7px;line-height:9px;font-weight:400;color:#9c9ca2;letter-spacing:0.852px;white-space:nowrap;-webkit-text-stroke-width:0.12px;">09</div>
<div id="t86" style="position:absolute;left:732.05px;top:566px;font-size:7px;line-height:9px;font-weight:400;color:#9c9ca2;letter-spacing:0.852px;white-space:nowrap;-webkit-text-stroke-width:0.12px;">10</div>
<div id="t87" style="position:absolute;left:765.25px;top:566px;font-size:7px;line-height:9px;font-weight:400;color:#9c9ca2;letter-spacing:1.109px;white-space:nowrap;-webkit-text-stroke-width:0.12px;">11</div>
<div id="t88" style="position:absolute;left:798.45px;top:566px;font-size:7px;line-height:9px;font-weight:400;color:#9c9ca2;letter-spacing:0.852px;white-space:nowrap;-webkit-text-stroke-width:0.12px;">12</div>
<div id="t89" style="position:absolute;left:831.65px;top:566px;font-size:7px;line-height:9px;font-weight:400;color:#9c9ca2;letter-spacing:0.852px;white-space:nowrap;-webkit-text-stroke-width:0.12px;">13</div>
<div id="t90" style="position:absolute;left:864.85px;top:566px;font-size:7px;line-height:9px;font-weight:400;color:#9c9ca2;letter-spacing:0.852px;white-space:nowrap;-webkit-text-stroke-width:0.12px;">14</div>
<div id="t91" style="position:absolute;left:898.05px;top:566px;font-size:7px;line-height:9px;font-weight:400;color:#9c9ca2;letter-spacing:0.852px;white-space:nowrap;-webkit-text-stroke-width:0.12px;">15</div>
<div id="t92" style="position:absolute;left:931.25px;top:566px;font-size:7px;line-height:9px;font-weight:400;color:#9c9ca2;letter-spacing:0.852px;white-space:nowrap;-webkit-text-stroke-width:0.12px;">16</div>
<div id="t93" style="position:absolute;left:964.45px;top:566px;font-size:7px;line-height:9px;font-weight:400;color:#9c9ca2;letter-spacing:0.852px;white-space:nowrap;-webkit-text-stroke-width:0.12px;">17</div>
<div id="t94" style="position:absolute;left:997.65px;top:566px;font-size:7px;line-height:9px;font-weight:400;color:#9c9ca2;letter-spacing:0.852px;white-space:nowrap;-webkit-text-stroke-width:0.12px;">18</div>
<div id="t95" style="position:absolute;left:1030.85px;top:566px;font-size:7px;line-height:9px;font-weight:400;color:#9c9ca2;letter-spacing:0.852px;white-space:nowrap;-webkit-text-stroke-width:0.12px;">19</div>
<div id="t96" style="position:absolute;left:1064.05px;top:566px;font-size:7px;line-height:9px;font-weight:400;color:#9c9ca2;letter-spacing:0.852px;white-space:nowrap;-webkit-text-stroke-width:0.12px;">20</div>
<div id="t97" style="position:absolute;left:1097.25px;top:566px;font-size:7px;line-height:9px;font-weight:400;color:#9c9ca2;letter-spacing:0.852px;white-space:nowrap;-webkit-text-stroke-width:0.12px;">21</div>
<div id="t98" style="position:absolute;left:1130.45px;top:566px;font-size:7px;line-height:9px;font-weight:400;color:#9c9ca2;letter-spacing:0.852px;white-space:nowrap;-webkit-text-stroke-width:0.12px;">22</div>
<div id="t99" style="position:absolute;left:1163.65px;top:566px;font-size:7px;line-height:9px;font-weight:400;color:#9c9ca2;letter-spacing:0.852px;white-space:nowrap;-webkit-text-stroke-width:0.12px;">23</div>
<div id="t100" style="position:absolute;left:1177.3px;top:417px;font-size:7px;line-height:9px;font-weight:400;color:#a2a2a8;letter-spacing:0.094px;white-space:nowrap;">2</div>
<div id="t101" style="position:absolute;left:1174.2px;top:450px;font-size:7px;line-height:9px;font-weight:400;color:#a2a2a8;letter-spacing:0.155px;white-space:nowrap;">1.5</div>
<div id="t102" style="position:absolute;left:1177.8px;top:483px;font-size:7px;line-height:9px;font-weight:400;color:#a2a2a8;letter-spacing:-0.906px;white-space:nowrap;">1</div>
<div id="t103" style="position:absolute;left:1174.2px;top:517px;font-size:7px;line-height:9px;font-weight:400;color:#a2a2a8;letter-spacing:0.155px;white-space:nowrap;">0.5</div>
<div id="t104" style="position:absolute;left:1177.05px;top:550px;font-size:7px;line-height:9px;font-weight:400;color:#a2a2a8;letter-spacing:0.594px;white-space:nowrap;">0</div>
<div id="t105" style="position:absolute;left:1173.8px;top:580px;font-size:7px;line-height:9px;font-weight:400;color:#a2a2a8;letter-spacing:-0.065px;white-space:nowrap;">Тыс. ₽</div>
<svg style="left:0;top:0" width="1" height="1"><polyline points="670.4,556.9 703.6,553.6 736.8,527.4 770.0,550.2 803.2,555.6 836.4,550.9 869.6,533.5 902.8,556.9" fill="none" stroke="#56c2c6" stroke-width="1.2" stroke-dasharray="2.6 2.4"/><polyline points="404.8,556.9 438.0,556.9 471.2,556.9 504.4,556.9 537.6,556.9 570.8,556.9 604.0,556.9 637.2,556.9 670.4,556.9 703.6,556.9 736.8,556.9 770.0,556.9 803.2,556.9 836.4,553.6 869.6,429.1 902.8,529.8 936.0,548.0 969.2,492.8 1002.4,552.7 1035.6,556.9 1068.8,556.9 1102.0,556.9 1135.2,556.9 1168.4,553.6" fill="none" stroke="#e35fd6" stroke-width="1.35" stroke-linejoin="round"/><polyline points="404.8,556.9 438.0,556.9 471.2,556.9 504.4,556.9 537.6,556.9 570.8,556.9 604.0,556.9 637.2,554.6 670.4,556.9 703.6,554.6 736.8,552.9 770.0,556.9 803.2,556.9 836.4,556.9 869.6,556.9 902.8,556.9 936.0,556.9 969.2,556.9 1002.4,556.9 1035.6,556.9 1068.8,556.9 1102.0,556.9 1135.2,556.9 1168.4,556.9" fill="none" stroke="#4857d4" stroke-width="2.4" stroke-linejoin="round"/></svg>
<div style="position:absolute;left:402.5px;top:581px;width:8.3px;height:8.3px;background:#4857d4;border-radius:2px;"></div>
<svg style="left:0;top:0" width="1" height="1"><path d="M404.7 585.2 L406.2 586.7 L408.7 583.6" fill="none" stroke="#fff" stroke-width="1.3" stroke-linecap="round" stroke-linejoin="round"/></svg>
<div id="t106" style="position:absolute;left:414.7px;top:581px;font-size:7.44px;line-height:10px;font-weight:400;color:#2a2a2e;letter-spacing:-0.018px;white-space:nowrap;-webkit-text-stroke-width:0.25px;">Сегодня</div>
<div style="position:absolute;left:460.3px;top:581px;width:8.3px;height:8.3px;background:#e65ad2;border-radius:2px;"></div>
<svg style="left:0;top:0" width="1" height="1"><path d="M462.5 585.2 L464.0 586.7 L466.5 583.6" fill="none" stroke="#fff" stroke-width="1.3" stroke-linecap="round" stroke-linejoin="round"/></svg>
<div id="t107" style="position:absolute;left:472.5px;top:581px;font-size:7.44px;line-height:10px;font-weight:400;color:#2a2a2e;letter-spacing:-0.162px;white-space:nowrap;-webkit-text-stroke-width:0.25px;">Вчера</div>
<div style="position:absolute;left:510.3px;top:581px;width:8.3px;height:8.3px;background:#56c2c6;border-radius:2px;"></div>
<svg style="left:0;top:0" width="1" height="1"><path d="M512.5 585.2 L514.0 586.7 L516.5 583.6" fill="none" stroke="#fff" stroke-width="1.3" stroke-linecap="round" stroke-linejoin="round"/></svg>
<div id="t108" style="position:absolute;left:522.5px;top:581px;font-size:7.44px;line-height:10px;font-weight:400;color:#2a2a2e;letter-spacing:-0.052px;white-space:nowrap;-webkit-text-stroke-width:0.25px;">Неделю назад</div>
<div style="position:absolute;left:390px;top:605.8px;width:265.3px;height:154.2px;background:#ffffff;border-radius:8px;"></div>
<div id="t109" style="position:absolute;left:401.7px;top:617px;font-size:10.746px;line-height:14px;font-weight:400;color:#1f1f23;letter-spacing:0.0px;white-space:nowrap;">Новости</div>
<div id="t110" style="position:absolute;left:401.7px;top:642px;font-size:8.789px;line-height:11px;font-weight:400;color:#a2a2a8;letter-spacing:0.0px;white-space:nowrap;">28 ноября</div>
<div id="t111" style="position:absolute;left:401.7px;top:655px;font-size:10px;line-height:13px;font-weight:700;color:#1f1f23;letter-spacing:0.205px;white-space:nowrap;">«Новосемейкино» с 28 ноября временно не</div>
<div id="t112" style="position:absolute;left:401.7px;top:668px;font-size:10px;line-height:13px;font-weight:700;color:#1f1f23;letter-spacing:0.068px;white-space:nowrap;">принимает некоторые товары в коробах и…</div>
<div style="position:absolute;left:401.3px;top:688.9px;width:32.1px;height:9.8px;background:#f3f3f5;border-radius:3px;"></div>
<svg style="left:0;top:0" width="1" height="1"><path d="M404 690.9 h5 v5.4 h-5z" fill="none" stroke="#8e8e96" stroke-width="0.9"/><path d="M404 692.7 h5 M404 694.5 h5" stroke="#8e8e96" stroke-width="0.8"/></svg>
<div id="t113" style="position:absolute;left:413.3px;top:690px;font-size:6.5px;line-height:9px;font-weight:700;color:#8e8e96;letter-spacing:0.396px;white-space:nowrap;">FBW</div>
<div style="position:absolute;left:666.7px;top:606.2px;width:263.3px;height:153.8px;background:#ffffff;border-radius:8px;"></div>
<div id="t114" style="position:absolute;left:676.7px;top:614px;font-size:10.377px;line-height:13px;font-weight:400;color:#1f1f23;letter-spacing:0.0px;white-space:nowrap;">Отзывы</div>
<div style="position:absolute;left:719.8px;top:614.6px;width:16.8px;height:11.4px;background:#fdefe7;border-radius:5px;"></div>
<div id="t115" style="position:absolute;left:721.8px;top:616px;font-size:7.5px;line-height:10px;font-weight:400;color:#f5895a;letter-spacing:0.295px;white-space:nowrap;-webkit-text-stroke-width:0.1px;">603</div>
<div id="t116" style="position:absolute;left:752.6px;top:613px;font-size:10.743px;line-height:14px;font-weight:400;color:#1f1f23;letter-spacing:0.0px;white-space:nowrap;">Вопросы</div>
<div style="position:absolute;left:801.6px;top:614.6px;width:12.4px;height:11.4px;background:#fdefe7;border-radius:5px;"></div>
<div id="t117" style="position:absolute;left:803.3px;top:616px;font-size:7.5px;line-height:10px;font-weight:400;color:#f5895a;letter-spacing:0.328px;white-space:nowrap;-webkit-text-stroke-width:0.1px;">22</div>
<div style="position:absolute;left:676.7px;top:632.2px;width:59.6px;height:1.7px;background:#1f1f23;border-radius:1px;"></div>
<div style="position:absolute;left:676.7px;top:643.7px;width:46.3px;height:68.3px;background:linear-gradient(180deg,#5cb9f2 0%,#3f86ea 100%);border-radius:6px;"></div>
<div id="t118" style="position:absolute;left:690.0px;top:669px;font-size:10.23px;line-height:13px;font-weight:400;color:#d8ecfb;letter-spacing:-0.658px;white-space:nowrap;-webkit-text-stroke-width:0.2px;">PNG</div>
<div id="t119" style="position:absolute;left:734.7px;top:645px;font-size:8.881px;line-height:12px;font-weight:400;color:#a2a2a8;letter-spacing:0.023px;white-space:nowrap;">Сегодня</div>
<div style="position:absolute;left:775.4px;top:650.6px;width:2.0px;height:2.0px;background:#a2a2a8;border-radius:1px;"></div>
<svg style="left:0;top:0" width="1" height="1"><path d="M791.6 648.2 l-5.6 5.6 a1.6 1.6 0 0 1 -2.3 -2.3 l5.2 -5.2 a1.1 1.1 0 0 1 1.6 1.6 l-4.6 4.6" fill="none" stroke="#a2a2a8" stroke-width="0.9"/></svg>
<div id="t120" style="position:absolute;left:795.7px;top:647px;font-size:7.719px;line-height:10px;font-weight:400;color:#a2a2a8;letter-spacing:-0.001px;white-space:nowrap;">3</div>
<svg style="left:0;top:0" width="1" height="1"><g fill="#f47b3e"><polygon points="873.40,647.50 874.54,650.23 877.49,650.47 875.24,652.40 875.93,655.28 873.40,653.73 870.87,655.28 871.56,652.40 869.31,650.47 872.26,650.23" stroke="#f47b3e" stroke-width="0.6" stroke-linejoin="round"/><polygon points="883.75,647.50 884.89,650.23 887.84,650.47 885.59,652.40 886.28,655.28 883.75,653.73 881.22,655.28 881.91,652.40 879.66,650.47 882.61,650.23" stroke="#f47b3e" stroke-width="0.6" stroke-linejoin="round"/><polygon points="894.10,647.50 895.24,650.23 898.19,650.47 895.94,652.40 896.63,655.28 894.10,653.73 891.57,655.28 892.26,652.40 890.01,650.47 892.96,650.23" stroke="#f47b3e" stroke-width="0.6" stroke-linejoin="round"/><polygon points="904.45,647.50 905.59,650.23 908.54,650.47 906.29,652.40 906.98,655.28 904.45,653.73 901.92,655.28 902.61,652.40 900.36,650.47 903.31,650.23" stroke="#f47b3e" stroke-width="0.6" stroke-linejoin="round"/><polygon points="914.80,647.50 915.94,650.23 918.89,650.47 916.64,652.40 917.33,655.28 914.80,653.73 912.27,655.28 912.96,652.40 910.71,650.47 913.66,650.23" stroke="#f47b3e" stroke-width="0.6" stroke-linejoin="round"/></g></svg>
<div id="t121" style="position:absolute;left:734.7px;top:662px;font-size:10.694px;line-height:14px;font-weight:400;color:#1f1f23;letter-spacing:0.0px;white-space:nowrap;-webkit-text-stroke:0.2px #1f1f23;">замечательный товар, ножницы</div>
<div id="t122" style="position:absolute;left:734.7px;top:675px;font-size:10.7px;line-height:14px;font-weight:400;color:#1f1f23;letter-spacing:0.133px;white-space:nowrap;-webkit-text-stroke:0.2px #1f1f23;">режут хорошо</div>
<div style="position:absolute;left:941.2px;top:606.2px;width:262.2px;height:153.8px;background:#ffffff;border-radius:8px;"></div>
<div id="t123" style="position:absolute;left:951.7px;top:616px;font-size:10.547px;line-height:14px;font-weight:400;color:#1f1f23;letter-spacing:-0.0px;white-space:nowrap;">Отчёты</div>
<div style="position:absolute;left:951.7px;top:641.2px;width:115.6px;height:118.8px;background:#fff;border-radius:8px;box-sizing:border-box;border:1px solid #ececf0;"></div>
<div style="position:absolute;left:1078.4px;top:641.2px;width:115.0px;height:118.8px;background:#fff;border-radius:8px;box-sizing:border-box;border:1px solid #ececf0;"></div>
<div id="t124" style="position:absolute;left:965.7px;top:654px;font-size:8.881px;line-height:12px;font-weight:400;color:#1f1f23;letter-spacing:0.039px;white-space:nowrap;">По продажам</div>
<div id="t125" style="position:absolute;left:1092.5px;top:654px;font-size:8.881px;line-height:12px;font-weight:400;color:#1f1f23;letter-spacing:0.067px;white-space:nowrap;">По остаткам</div>
<div id="t126" style="position:absolute;left:1092.5px;top:666px;font-size:8.756px;line-height:11px;font-weight:400;color:#1f1f23;letter-spacing:0.0px;white-space:nowrap;">на складе</div>
<div style="position:absolute;left:960px;top:699px;width:32px;height:13px;background:#fafafb;border-radius:6px;"></div>
<div style="position:absolute;left:966.5px;top:702px;width:13.2px;height:12px;background:#fff;border-radius:3px;box-sizing:border-box;border:1.2px solid #c4c4c8;"></div>
<div style="position:absolute;left:1087px;top:699px;width:32px;height:13px;background:#fafafb;border-radius:6px;"></div>
<div style="position:absolute;left:1093.7px;top:702px;width:13.3px;height:12px;background:#fff;border-radius:3px;box-sizing:border-box;border:1.2px solid #b4b4b8;"></div>
<div style="position:absolute;left:1241.4px;top:657.4px;width:29.0px;height:29.0px;background:#4a4a5c;border-radius:15px;"></div>
<div id="t127" style="position:absolute;left:1253.15px;top:666px;font-size:10px;line-height:13px;font-weight:700;color:#fff;letter-spacing:-0.609px;white-space:nowrap;">?</div>
</div></div><div id="bord"></div></body></html>
